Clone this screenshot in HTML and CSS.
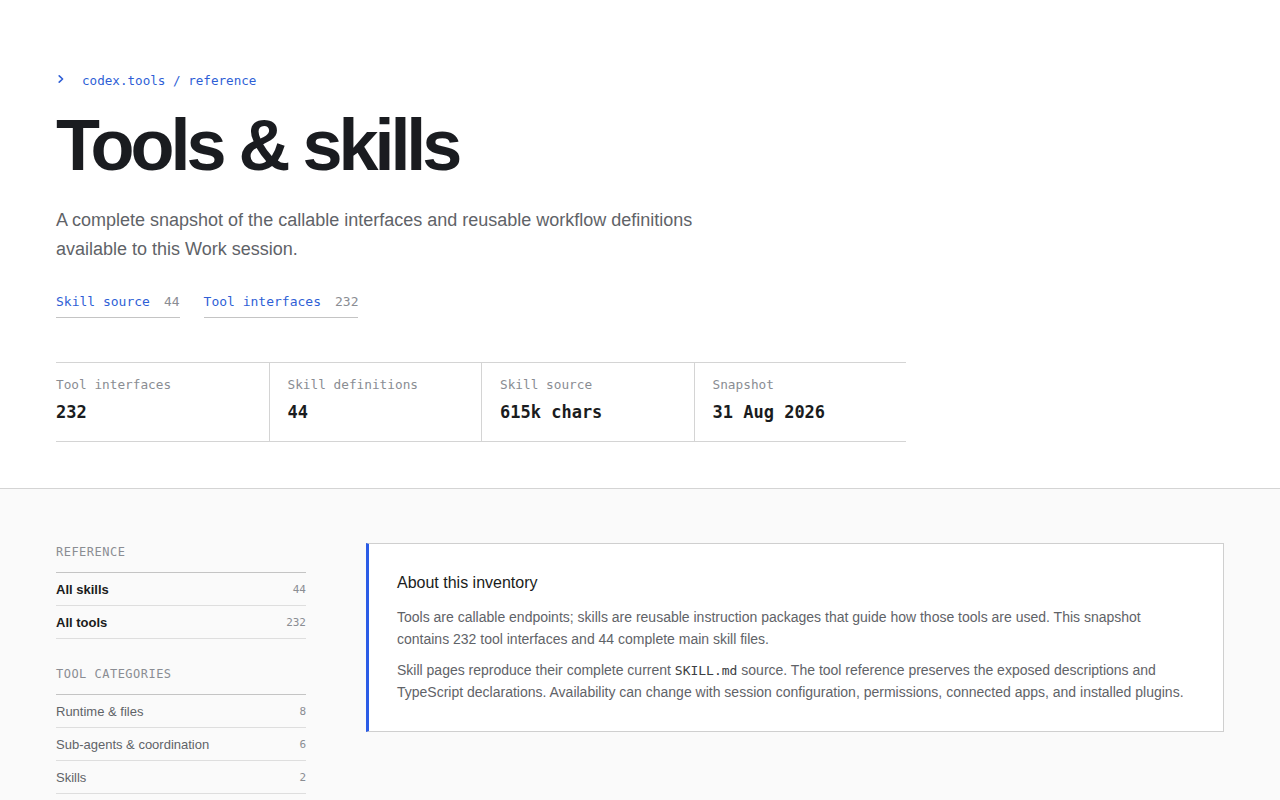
FILE: index.html
```html
<!DOCTYPE html>
<html lang="en">
<head>
<meta charset="utf-8">
<title>Tools &amp; skills</title>
<link rel="stylesheet" href="styles.css">
</head>
<body>
<header class="hero">
  <div class="crumb"><svg class="chev" width="8" height="10" viewBox="0 0 8 10" aria-hidden="true"><polyline points="2.2,1.8 5.6,5 2.2,8.2" fill="none" stroke="#2f5fd6" stroke-width="1.6" stroke-linecap="round" stroke-linejoin="round"/></svg><span>codex.tools / reference</span></div>
  <h1 class="title">Tools &amp; skills</h1>
  <p class="lede">A complete snapshot of the callable interfaces and reusable workflow definitions available to this Work session.</p>
  <nav class="tabs">
    <a class="tab" href="#"><span class="tab-name">Skill source</span><span class="tab-count">44</span></a>
    <a class="tab" href="#"><span class="tab-name">Tool interfaces</span><span class="tab-count">232</span></a>
  </nav>
  <div class="stats">
    <div class="stat"><div class="stat-label">Tool interfaces</div><div class="stat-value">232</div></div>
    <div class="stat"><div class="stat-label">Skill definitions</div><div class="stat-value">44</div></div>
    <div class="stat"><div class="stat-label">Skill source</div><div class="stat-value">615k chars</div></div>
    <div class="stat"><div class="stat-label">Snapshot</div><div class="stat-value">31 Aug 2026</div></div>
  </div>
</header>
<section class="lower">
  <aside class="side">
    <div class="side-head">Reference</div>
    <ul class="side-list">
      <li class="side-row strong"><span>All skills</span><span class="cnt">44</span></li>
      <li class="side-row strong"><span>All tools</span><span class="cnt">232</span></li>
    </ul>
    <div class="side-head second">Tool categories</div>
    <ul class="side-list">
      <li class="side-row"><span>Runtime &amp; files</span><span class="cnt">8</span></li>
      <li class="side-row"><span>Sub-agents &amp; coordination</span><span class="cnt">6</span></li>
      <li class="side-row"><span>Skills</span><span class="cnt">2</span></li>
    </ul>
  </aside>
  <main class="main">
    <div class="card">
      <h2 class="card-title">About this inventory</h2>
      <p class="card-p">Tools are callable endpoints; skills are reusable instruction packages that guide how those tools are used. This snapshot contains 232 tool interfaces and 44 complete main skill files.</p>
      <p class="card-p">Skill pages reproduce their complete current <code>SKILL.md</code> source. The tool reference preserves the exposed descriptions and TypeScript declarations. Availability can change with session configuration, permissions, connected apps, and installed plugins.</p>
    </div>
  </main>
</section>
</body>
</html>
```

FILE: styles.css
```css
* { box-sizing: border-box; }
html, body { margin: 0; padding: 0; }
body {
  font-family: "Liberation Sans", Arial, sans-serif;
  color: #1a1c20;
  background: #fafafa;
}
.hero {
  background: #fff;
  padding: 70px 56px 46px;
  border-bottom: 1px solid #d4d4d4;
}
.crumb {
  font-family: "DejaVu Sans Mono", monospace;
  font-size: 12.6px;
  color: #2f5fd6;
  display: flex;
  align-items: center;
  gap: 17px;
  height: 20px;
}
.chev { display: block; margin-left: 1px; margin-top: -3px; }
.title {
  margin: 16px 0 0;
  font-size: 72px;
  line-height: 78px;
  font-weight: 700;
  letter-spacing: -0.056em;
  color: #1a1c20;
}
.lede {
  margin: 22px 0 0;
  max-width: 680px;
  font-size: 18px;
  line-height: 29px;
  color: #5f6368;
}
.tabs {
  margin-top: 29px;
  display: flex;
  gap: 24px;
}
.tab {
  text-decoration: none;
  font-family: "DejaVu Sans Mono", monospace;
  font-size: 13px;
  line-height: 18px;
  padding-bottom: 6px;
  border-bottom: 1px solid #c4c4c4;
  display: flex;
  gap: 14px;
}
.tab-name { color: #2f5fd6; }
.tab-count { color: #8a8d93; }
.stats {
  margin-top: 44px;
  width: 850px;
  display: grid;
  grid-template-columns: repeat(4, 1fr);
  border-top: 1px solid #d4d4d4;
  border-bottom: 1px solid #d4d4d4;
}
.stat {
  padding: 14px 18px 17px;
  border-left: 1px solid #d4d4d4;
}
.stat:first-child { border-left: none; padding-left: 0; }
.stat-label {
  font-family: "DejaVu Sans Mono", monospace;
  font-size: 12.75px;
  line-height: 16px;
  color: #8a8d93;
}
.stat-value {
  margin-top: 7px;
  font-family: "DejaVu Sans Mono", monospace;
  font-size: 17px;
  line-height: 24px;
  font-weight: 700;
  color: #1a1c20;
}
.lower {
  display: flex;
  gap: 60px;
  padding: 54px 56px 40px;
  background: #fafafa;
}
.side { width: 250px; flex: none; }
.side-head {
  font-family: "DejaVu Sans Mono", monospace;
  font-size: 12px;
  line-height: 16px;
  letter-spacing: 0.04em;
  text-transform: uppercase;
  color: #8a8d93;
  padding-bottom: 12px;
  margin-top: 1px;
}
.side-head.second { margin-top: 27px; }
.side-list {
  list-style: none;
  margin: 0;
  padding: 0;
  border-top: 1px solid #c4c4c4;
}
.side-row {
  display: flex;
  justify-content: space-between;
  align-items: center;
  height: 33px;
  border-bottom: 1px solid #dedede;
  font-size: 13px;
  color: #5f6368;
}
.side-row.strong { font-weight: 700; color: #1a1c20; }
.cnt {
  font-family: "DejaVu Sans Mono", monospace;
  font-size: 11px;
  font-weight: 400;
  color: #8a8d93;
}
.main { flex: 1; min-width: 0; }
.card {
  background: #fff;
  border: 1px solid #cfcfcf;
  border-left: 3px solid #2b5ce6;
  padding: 28px 28px 28px;
}
.card-title {
  margin: 0;
  font-size: 16px;
  line-height: 22px;
  font-weight: 400;
  color: #1a1c20;
}
.card-p {
  margin: 12px 0 0;
  font-size: 14px;
  line-height: 22px;
  color: #5f6368;
}
.card-p + .card-p { margin-top: 9px; }
code {
  font-family: "DejaVu Sans Mono", monospace;
  font-size: 13px;
  line-height: 1;
  color: #3c4043;
}
```
